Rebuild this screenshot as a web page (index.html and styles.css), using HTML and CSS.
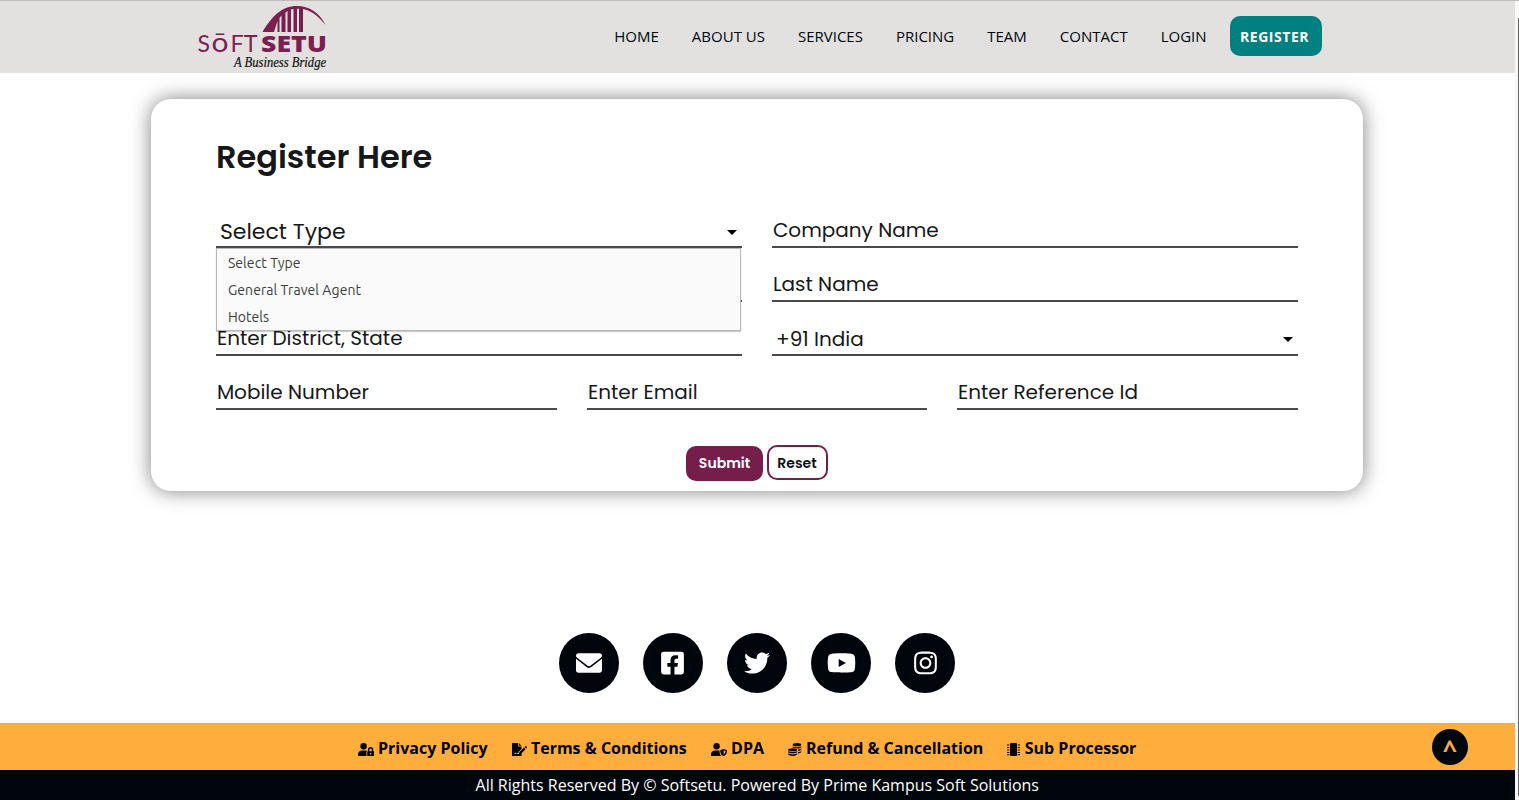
FILE: index.html
```html
<!DOCTYPE html>
<html lang="en">
<head>
<meta charset="utf-8">
<title>Softsetu - Register</title>
<link rel="stylesheet" href="styles.css">
</head>
<body>
<div class="page">
  <header class="header">
    <a class="brand">
      <svg width="134" height="72" viewBox="0 0 134 72">
        <path class="plum" fill-rule="evenodd" d="M66.500 31C76 15 86 5 101 5C113 5 124 12 129.500 24C121 13 112 8.500 107 8V31H103V7.800H101V31H97.500V8L95 8.500V31H91.500V10L89.500 11.500V31H85.500V14.500L83.500 17V31H81.500V20L78 31Z"/>
        <text class="plum logo-thin" x="1.500" y="51">S</text>
        <text class="plum logo-thin logo-o" x="15.500" y="51" textLength="17" lengthAdjust="spacingAndGlyphs">ō</text>
        <text class="plum logo-thin" x="34.500" y="51" textLength="27" lengthAdjust="spacingAndGlyphs">FT</text>
        <text class="plum logo-bold" x="65" y="51" textLength="66" lengthAdjust="spacingAndGlyphs">SETU</text>
        <text class="logo-tag" x="38" y="66" textLength="92" lengthAdjust="spacingAndGlyphs">A Business Bridge</text>
      </svg>
    </a>
    <nav class="nav">
      <a>HOME</a><a>ABOUT US</a><a>SERVICES</a><a>PRICING</a><a>TEAM</a><a>CONTACT</a><a>LOGIN</a>
      <a class="nav-register">REGISTER</a>
    </nav>
  </header>

  <main class="main">
    <section class="card">
      <h1 class="title">Register Here</h1>
      <div class="row two">
        <div class="field select open"><span>Select Type</span><i class="caret"></i>
          <ul class="options"><li>Select Type</li><li>General Travel Agent</li><li>Hotels</li></ul>
        </div>
        <div class="field"><span>Company Name</span></div>
        <div class="field"></div>
        <div class="field"><span>Last Name</span></div>
        <div class="field"><span>Enter District, State</span></div>
        <div class="field select"><span>+91 India</span><i class="caret"></i></div>
      </div>
      <div class="row three">
        <div class="field"><span>Mobile Number</span></div>
        <div class="field"><span>Enter Email</span></div>
        <div class="field"><span>Enter Reference Id</span></div>
      </div>
      <div class="actions"><button class="btn submit">Submit</button><button class="btn reset">Reset</button></div>
    </section>

    <div class="socials">
      <a class="social"><svg width="26" height="26" viewBox="0 0 512 512"><path d="M256 352c-16.53 0-33.06-5.422-47.16-16.41L0 173.2V400C0 426.5 21.49 448 48 448h416c26.51 0 48-21.49 48-48V173.2l-208.8 162.5C289.1 346.6 272.5 352 256 352zM16.29 145.3l212.2 165.1c16.19 12.6 38.87 12.6 55.06 0l212.2-165.1C505.1 137.3 512 125 512 112C512 85.49 490.5 64 464 64h-416C21.49 64 0 85.49 0 112C0 125 6.01 137.3 16.29 145.3z"/></svg></a>
      <a class="social"><svg width="23" height="26" viewBox="0 0 448 512"><path d="M400 32H48A48 48 0 0 0 0 80v352a48 48 0 0 0 48 48h137.25V327.69h-63V256h63v-54.64c0-62.15 37-96.48 93.67-96.48 27.14 0 55.52 4.84 55.52 4.84v61h-31.27c-30.81 0-40.42 19.12-40.42 38.73V256h68.78l-11 71.69h-57.78V480H400a48 48 0 0 0 48-48V80a48 48 0 0 0-48-48z"/></svg></a>
      <a class="social"><svg width="26" height="26" viewBox="0 0 512 512"><path d="M459.37 151.716c.325 4.548.325 9.097.325 13.645 0 138.72-105.583 298.558-298.558 298.558-59.452 0-114.68-17.219-161.137-47.106 8.447.974 16.568 1.299 25.34 1.299 49.055 0 94.213-16.568 130.274-44.832-46.132-.975-84.792-31.188-98.112-72.772 6.498.974 12.995 1.624 19.818 1.624 9.421 0 18.843-1.3 27.614-3.573-48.081-9.747-84.143-51.98-84.143-102.985v-1.299c13.969 7.797 30.214 12.67 47.431 13.319-28.264-18.843-46.781-51.005-46.781-87.391 0-19.492 5.197-37.36 14.294-52.954 51.655 63.675 129.3 105.258 216.365 109.807-1.624-7.797-2.599-15.918-2.599-24.04 0-57.828 46.782-104.934 104.934-104.934 30.213 0 57.502 12.67 76.67 33.137 23.715-4.548 46.456-13.32 66.599-25.34-7.798 24.366-24.366 44.833-46.132 57.827 21.117-2.273 41.584-8.122 60.426-16.243-14.292 20.791-32.161 39.308-52.628 54.253z"/></svg></a>
      <a class="social"><svg class="nudge" width="29" height="26" viewBox="0 0 576 512"><path d="M549.655 124.083c-6.281-23.65-24.787-42.276-48.284-48.597C458.781 64 288 64 288 64S117.22 64 74.629 75.486c-23.497 6.322-42.003 24.947-48.284 48.597-11.412 42.867-11.412 132.305-11.412 132.305s0 89.438 11.412 132.305c6.281 23.65 24.787 41.5 48.284 47.821C117.22 448 288 448 288 448s170.78 0 213.371-11.486c23.497-6.321 42.003-24.171 48.284-47.821 11.412-42.867 11.412-132.305 11.412-132.305s0-89.438-11.412-132.305zm-317.51 213.508V175.185l142.739 81.205-142.739 81.201z"/></svg></a>
      <a class="social"><svg class="nudge" width="23" height="26" viewBox="0 0 448 512"><path d="M224.1 141c-63.6 0-114.9 51.3-114.9 114.9s51.3 114.9 114.9 114.9S339 319.5 339 255.9 287.7 141 224.1 141zm0 189.6c-41.1 0-74.7-33.5-74.7-74.7s33.5-74.7 74.7-74.7 74.7 33.5 74.7 74.7-33.6 74.7-74.7 74.7zm146.4-194.3c0 14.9-12 26.8-26.8 26.8-14.9 0-26.8-12-26.8-26.8s12-26.8 26.8-26.8 26.8 12 26.8 26.8zm76.1 27.2c-1.7-35.9-9.9-67.7-36.2-93.9-26.2-26.2-58-34.4-93.9-36.2-37-2.1-147.9-2.1-184.9 0-35.8 1.7-67.6 9.9-93.9 36.1s-34.4 58-36.2 93.9c-2.1 37-2.1 147.9 0 184.9 1.7 35.9 9.9 67.7 36.2 93.9s58 34.4 93.9 36.2c37 2.1 147.9 2.1 184.9 0 35.9-1.7 67.7-9.9 93.9-36.2 26.2-26.2 34.4-58 36.2-93.9 2.1-37 2.1-147.8 0-184.8zM398.8 388c-7.8 19.6-22.9 34.7-42.6 42.6-29.5 11.7-99.5 9-132.1 9s-102.7 2.6-132.1-9c-19.6-7.8-34.7-22.9-42.6-42.6-11.7-29.5-9-99.5-9-132.1s-2.6-102.7 9-132.1c7.8-19.6 22.9-34.7 42.6-42.6 29.5-11.7 99.5-9 132.1-9s102.7-2.6 132.1 9c19.6 7.8 34.7 22.9 42.6 42.6 11.7 29.5 9 99.5 9 132.1s2.7 102.7-9 132.1z"/></svg></a>
    </div>
  </main>

  <footer>
    <div class="links">
      <a class="link"><svg width="16" height="13" viewBox="0 0 16 13"><circle cx="5.6" cy="3.2" r="3.2"/><path d="M0 13v-1.5C0 9 1.8 7.500 4 7.500h3.200c.6 0 1.200.1 1.700.4-.3.400-.4.8-.4 1.300V13zM9.300 8.300h.7V6.700a2.600 2.600 0 0 1 5.200 0v1.600h.8V13H9.300zM11.400 8.300h2.400V6.700a1.200 1.200 0 0 0-2.400 0zM12 10v1.500h1.300V10z" fill-rule="evenodd"/></svg><span>Privacy Policy</span></a>
      <a class="link"><svg width="15" height="13" viewBox="0 0 15 13"><path d="M0 0h6v3.500h3.600v2.300L6.500 8.900l-.4 1.400-.8-.6-1 .9-.8-1.200L2 11h2l.6-.5.8.6h2.500l1.700-.9V13H0zM6.800 0l2.800 2.800H6.800zM7.300 9.300l4.700-4.700 1.600 1.600-4.700 4.700-2 .4zM12.600 4l.8-.8c.3-.3.7-.2 1 .1l.4.4c.3.3.3.7 0 1l-.7.8z"/></svg><span>Terms &amp; Conditions</span></a>
      <a class="link"><svg width="16" height="13" viewBox="0 0 16 13"><circle cx="5.600" cy="3.200" r="3.200"/><path d="M0 13v-1.500C0 9 1.800 7.500 4 7.500h3.200c.6 0 1 .1 1.300.3 0 2.400.5 4 1.700 5.200zM9.200 7.200L12.600 6l3.400 1.200c0 2.800-1 5-3.400 5.800-2.400-.8-3.400-3-3.400-5.800zm3.400.2v4c1.200-.6 1.900-1.700 2-3.300z" fill-rule="evenodd"/></svg><span>DPA</span></a>
      <a class="link"><svg width="13.500" height="13" viewBox="0 0 13.500 13"><ellipse cx="9" cy="1.700" rx="4.300" ry="1.600"/><path d="M4.800 3.200c1.800 1.300 6.700 1.300 8.500 0v1c-.8 1.200-3 1.500-4 1.400-.9-.6-3-.9-4.500-.9zM10 6.500c1.400-.1 2.600-.4 3.300-1v1c-.4.7-1.700 1.200-3.300 1.400zM10 8.900c1.400-.1 2.600-.4 3.300-1v1c-.4.7-1.700 1.200-3.300 1.400z"/><ellipse cx="4.600" cy="6.800" rx="4.500" ry="1.500"/><path d="M.1 8.200c2 1.100 7 1.100 9 0v1c-1.500 1.500-7.500 1.500-9 0zM.1 10.600c2 1.100 7 1.100 9 0v.9c-1.500 1.900-7.500 1.900-9 0z"/></svg><span>Refund &amp; Cancellation</span></a>
      <a class="link"><svg width="13" height="13" viewBox="0 0 13 13"><rect x="3" width="7" height="13" rx="1"/><path d="M0 1.500h2.300v1H0zM0 4h2.300v1H0zM0 6.500h2.300v1H0zM0 9h2.300v1H0zM0 11.200h2.300v1H0zM10.700 1.500H13v1h-2.300zM10.700 4H13v1h-2.300zM10.700 6.500H13v1h-2.300zM10.700 9H13v1h-2.300zM10.700 11.200H13v1h-2.300z"/></svg><span>Sub Processor</span></a>
      <a class="to-top">^</a>
    </div>
    <div class="copyright">All Rights Reserved By © Softsetu. Powered By Prime Kampus Soft Solutions</div>
  </footer>
</div>
<div class="scroll"><div class="thumb"></div></div>
</body>
</html>
```
FILE: styles.css
```css
* { box-sizing: border-box; }
body { margin: 0; display: flex; height: 800px; overflow: hidden; background: #fff; font-family: "Open Sans", "Noto Sans", sans-serif; border-top: 1px solid #bebebe; }
.page { width: 1515px; display: flex; flex-direction: column; height: 799px; }
.scroll { width: 4px; background: #f7f7f7; padding: 17px 0 4px 3px; }
.thumb { height: 100%; background: #666; }

.header { height: 72px; flex: none; background: #e3e1df; display: flex; justify-content: space-between; padding: 0 193px 0 196px; }
.brand { display: block; height: 72px; }
.brand svg { overflow: visible; }
.plum { fill: #7b1f50; }
.logo-thin { font: 400 23px Lato, sans-serif; }
.logo-o { font-size: 26px; }
.logo-bold { font: 800 23px "Open Sans", sans-serif; }
.logo-tag { font: italic 500 14px "Monotype Corsiva", "Z003", "URW Chancery L", "Liberation Serif", serif; fill: #111; stroke: #111; stroke-width: .2px; }
.nav { display: flex; align-items: center; gap: 33px; padding-bottom: 2px; font-size: 15px; color: #00070c; white-space: nowrap; }
.nav-register { margin-left: -9.600px; width: 92px; height: 40px; border-radius: 10px; background: #008080; color: #fff; font-weight: 700; font-size: 14px; letter-spacing: .55px; line-height: 41px; padding-left: 10px; }

.main { flex: 1; display: flex; flex-direction: column; align-items: center; padding: 26px 2px 0 0; }
.card { width: 1212px; height: 392px; border-radius: 20px; padding: 33px 65px 0; background: #fff; box-shadow: 0 0 20px rgba(0,0,0,.5); font-family: Poppins, Inter, sans-serif; color: #161719; }
.title { margin: 0 0 32px .5px; font-size: 32px; line-height: 50px; font-weight: 600; }
.row { display: grid; gap: 20px 30px; font-size: 20px; }
.two { grid-template-columns: 1fr 1fr; }
.three { grid-template-columns: 341px 340px 341px; margin-top: 20px; }
.field { position: relative; height: 34px; border-bottom: 2px solid #4a4a4c; padding-left: 1.4px; line-height: 32px; white-space: nowrap; display: flex; justify-content: space-between; align-items: center; }
.select { padding: 2px 5px 0 4.600px; }
.open { padding: 3px 5px 0 4.4px; font-size: 22px; }
.caret { border: 5px solid transparent; border-top-color: #000; border-bottom: 0; margin-top: 1px; }
.options { position: absolute; z-index: 2; left: 0; top: 34px; width: 525px; height: 83px; margin: 0; padding: 1px 0 0 11.400px; list-style: none; background: #fafafa; border: 1px solid #b8b8b8; box-shadow: 0 1px 1px rgba(0,0,0,.2); font: 14px/27px Ubuntu, "Noto Sans", sans-serif; letter-spacing: .08px; color: #3d3d3d; }
.actions { display: flex; justify-content: center; gap: 4px; padding-top: 35px; }
.btn { height: 35px; border-radius: 10px; font: 600 14px Poppins, Inter, sans-serif; padding: 0; }
.submit { width: 77px; margin-top: 1px; padding-left: 1px; background: #761e4b; color: #fff; border: 0; }
.reset { width: 61px; padding-top: 1px; background: #fff; color: #111; border: 2px solid #761e4b; }

.socials { display: flex; gap: 24px; margin-top: 142px; }
.social { width: 60px; height: 60px; border-radius: 50%; background: #00070c; display: flex; align-items: center; justify-content: center; }
.social svg { fill: #fff; }
.social .nudge { margin-left: 1px; }

.links { position: relative; height: 47px; background: #ffad3d; display: flex; align-items: center; justify-content: center; gap: 24px; padding: 3px 21px 0 0; font-size: 16px; font-weight: 700; color: #000; white-space: nowrap; }
.link { display: flex; align-items: center; gap: 4.400px; }
.link svg { margin-top: 3px; fill: #000; }
.to-top { position: absolute; left: 1432px; top: 6px; width: 36px; height: 36px; border-radius: 50%; background: #00070c; color: #ffad3d; text-align: center; line-height: 39px; font-size: 25px; }
.copyright { height: 30px; padding-right: .5px; background: #00070c; color: #fff; text-align: center; font-size: 16px; line-height: 30px; }
```
